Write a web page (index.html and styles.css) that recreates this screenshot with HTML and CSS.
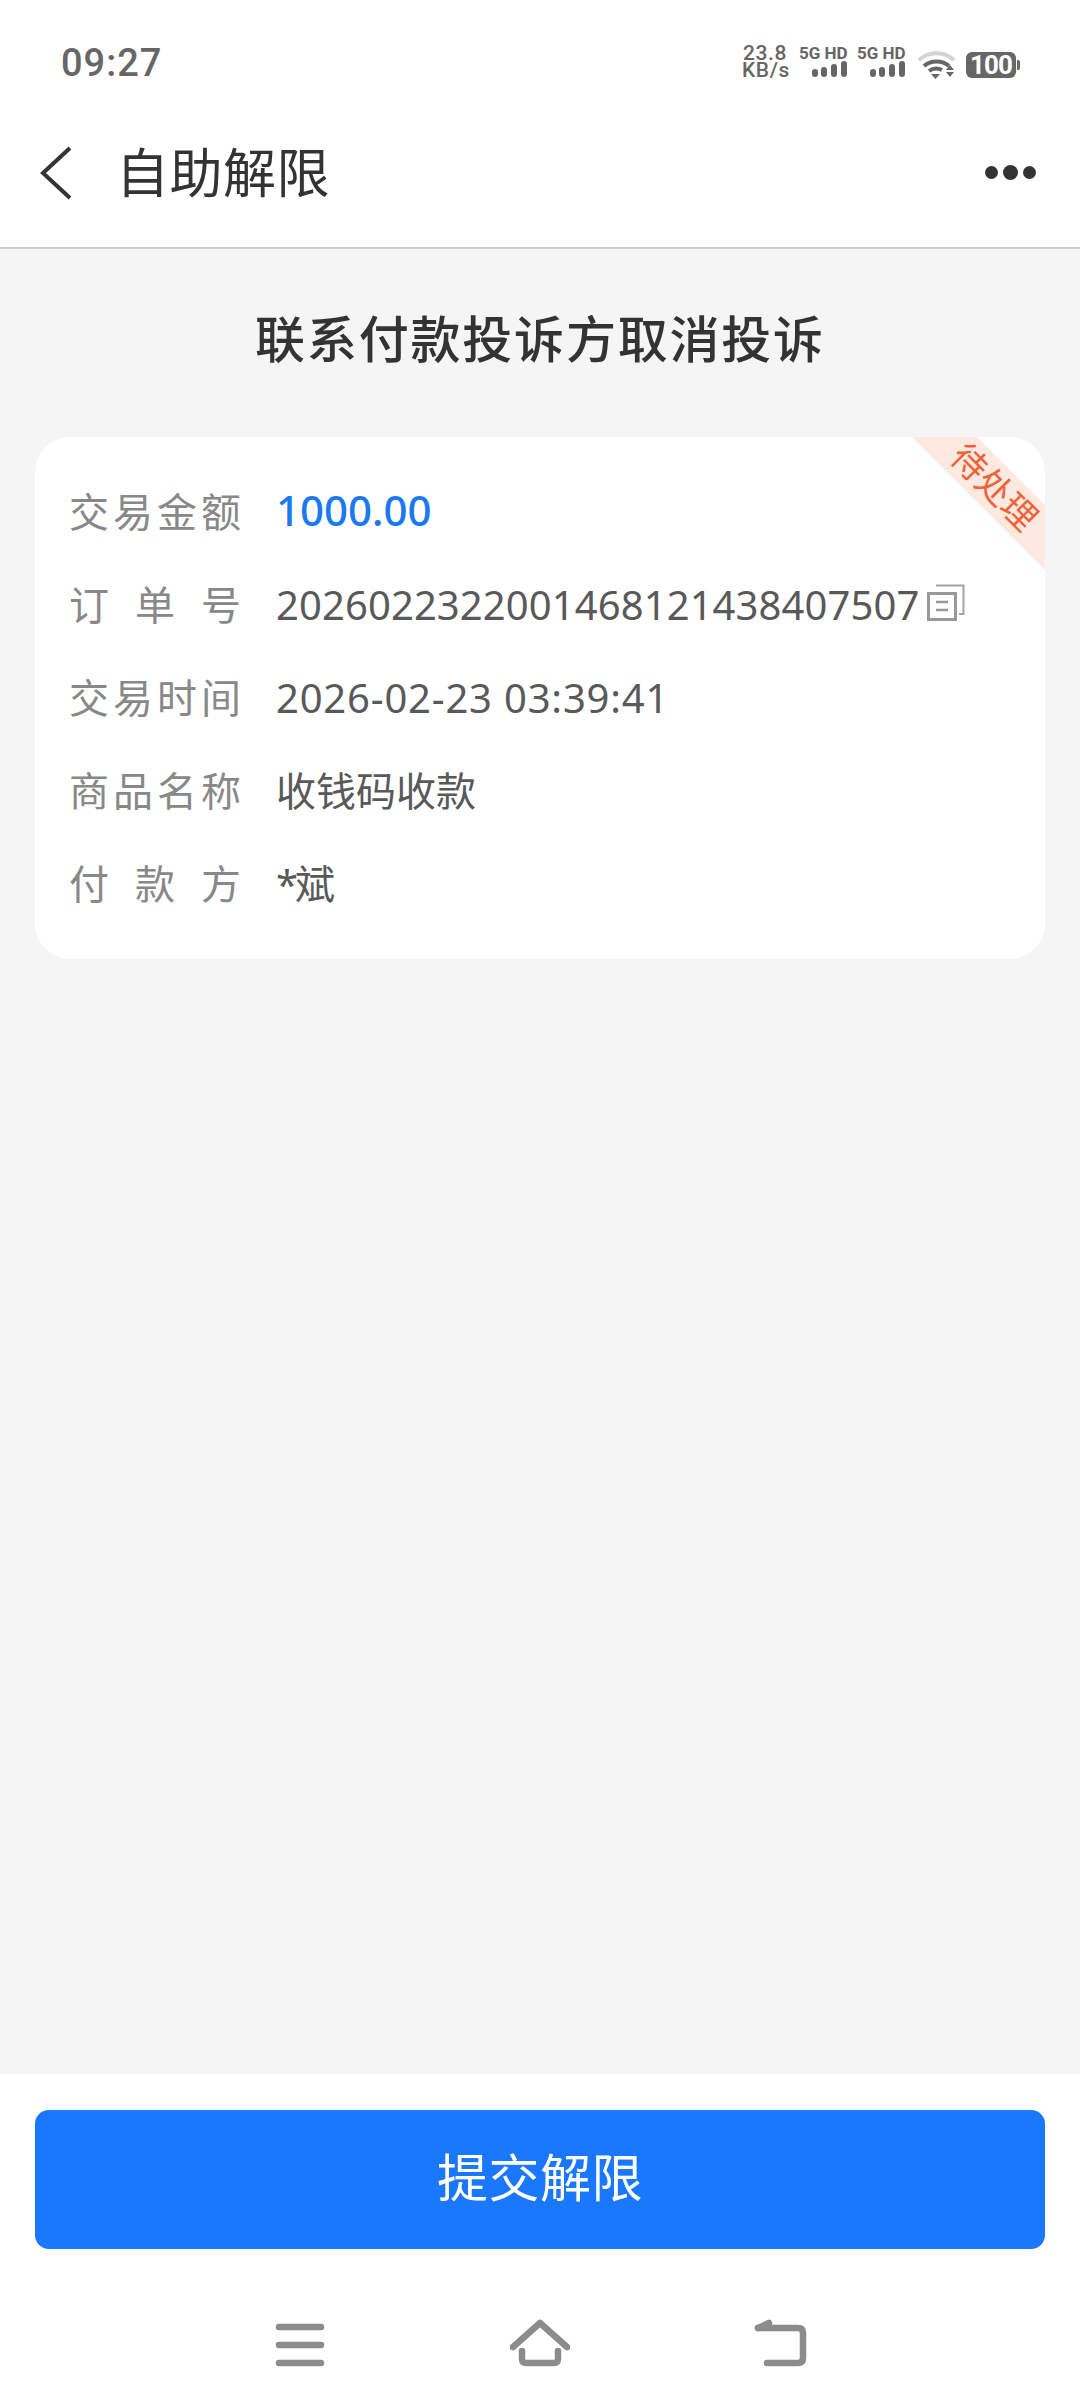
FILE: index.html
```html
<!DOCTYPE html>
<html lang="zh-CN">

<head>
    <meta charset="UTF-8">
    <meta name="viewport" content="width=device-width, initial-scale=1.0">
    <title>自助解限</title>
    <link rel="stylesheet" href="styles.css">
</head>

<body>
    <div class="status-bar">
        <span class="time">09:27</span>
        <div class="status-icons">
            <div class="speed">23.8
KB/s</div>
            <div class="sim">
                <span class="sim-name">5G HD</span>
                <svg class="sim-bars" width="35" height="16" viewBox="0 0 35 16">
                    <rect x="0" y="8" width="6" height="8" rx="3" />
                    <rect x="9" y="6" width="6" height="10" rx="3" />
                    <rect x="19" y="3" width="6" height="13" rx="3" />
                    <rect x="29" y="0" width="6" height="16" rx="3" />
                </svg>
            </div>
            <div class="sim">
                <span class="sim-name">5G HD</span>
                <svg class="sim-bars" width="35" height="16" viewBox="0 0 35 16">
                    <rect x="0" y="8" width="6" height="8" rx="3" />
                    <rect x="9" y="6" width="6" height="10" rx="3" />
                    <rect x="19" y="3" width="6" height="13" rx="3" />
                    <rect x="29" y="0" width="6" height="16" rx="3" />
                </svg>
            </div>
            <svg class="wifi" width="37" height="28" viewBox="0 0 37 28">
                <path d="M1 9 C11 0 26 0 36 9" fill="none" stroke="#d4d4d4" stroke-width="4" />
                <path d="M6 15 C13 9 24 9 31 15" fill="none" stroke="#666" stroke-width="4" />
                <path d="M11 20 C15 17 20 17 24 19" fill="none" stroke="#666" stroke-width="4" />
                <path d="M13 23 H22 L17.500 28 Z" fill="#666" />
                <path d="M32 14 L36 19 H28 Z M28 21 H36 L32 26 Z" fill="#666" />
            </svg>
            <div class="battery"><span class="battery-level">100</span><i class="battery-cap"></i></div>
        </div>
    </div>

    <div class="header">
        <svg class="back" width="34" height="54" viewBox="0 0 34 54">
            <path d="M31 2 L4 27 L31 52" fill="none" stroke="#333" stroke-width="4" />
        </svg>
        <span class="header-title">自助解限</span>
        <div class="more"><i></i><i class="more-mid"></i><i></i></div>
    </div>

    <div class="main">
        <h1 class="page-title">联系付款投诉方取消投诉</h1>
        <div class="card">
            <div class="ribbon"></div>
            <span class="ribbon-text">待处理</span>
            <div class="row">
                <span class="label">交易金额</span>
                <span class="value amount">1000.00</span>
            </div>
            <div class="row">
                <span class="label">订单号</span>
                <span class="value order-no">2026022322001468121438407507</span>
                <svg class="copy" width="38" height="37" viewBox="0 0 38 37">
                    <path d="M9 1.500 H36.500 V30 H32" fill="none" stroke="#a3a3a3" stroke-width="2" />
                    <rect x="1.500" y="9.500" width="27" height="26" fill="none" stroke="#999" stroke-width="3" />
                    <path d="M9 18 H21 M9 26 H21" stroke="#999" stroke-width="2.500" />
                </svg>
            </div>
            <div class="row">
                <span class="label">交易时间</span>
                <span class="value trade-time">2026-02-23 03:39:41</span>
            </div>
            <div class="row">
                <span class="label">商品名称</span>
                <span class="value">收钱码收款</span>
            </div>
            <div class="row">
                <span class="label">付款方</span>
                <span class="value payer">*斌</span>
            </div>
        </div>
    </div>

    <div class="footer">
        <button class="submit">提交解限</button>
        <div class="nav">
            <svg width="60" height="50" viewBox="0 0 60 50">
                <path d="M9 9 H51 M9 27 H51 M9 45 H51" />
            </svg>
            <svg width="60" height="50" viewBox="0 0 60 50">
                <path d="M3 29 L30 5 L57 29" />
                <path d="M12 33 V41 Q12 45 16 45 H44 Q48 45 48 41 V33" />
            </svg>
            <svg width="60" height="50" viewBox="0 0 60 50">
                <path d="M8 10 H48 Q53 10 53 15 V40 Q53 45 48 45 H17" />
                <path d="M8 10 L19 5" />
            </svg>
        </div>
    </div>
</body>

</html>
```

FILE: styles.css
```css
* {
    margin: 0;
    padding: 0;
    box-sizing: border-box;
}

body {
    width: 1080px;
    height: 2408px;
    display: flex;
    flex-direction: column;
    overflow: hidden;
    background-color: #f5f5f5;
    font-family: "Noto Sans", "Noto Sans CJK SC", sans-serif;
}

.status-bar {
    height: 80px;
    padding: 42px 60px 0 61px;
    display: flex;
    justify-content: space-between;
    align-items: flex-start;
    background-color: #fff;
    color: #666;
}

.time {
    font-family: Roboto, sans-serif;
    font-size: 38px;
    line-height: 42px;
    font-weight: 500;
    letter-spacing: 1px;
}

.status-icons {
    display: flex;
    align-items: flex-start;
    margin-top: 3px;
}

.speed {
    width: 46px;
    font-family: Roboto, sans-serif;
    font-size: 21px;
    line-height: 17px;
    font-weight: 500;
    letter-spacing: 0.600px;
    text-align: center;
    white-space: pre-line;
}

.sim {
    width: 48px;
    margin-left: 11px;
    display: flex;
    flex-direction: column;
    align-items: flex-end;
}

.sim + .sim {
    margin-left: 10px;
}

.sim-name {
    width: 48px;
    font-family: Roboto, sans-serif;
    font-size: 17px;
    line-height: 16px;
    font-weight: 700;
    white-space: nowrap;
}

.sim-bars {
    display: block;
    fill: #666;
}

.wifi {
    margin: 6px 0 0 13px;
}

.battery {
    width: 54px;
    height: 26px;
    margin: 7px 0 0 11px;
    display: flex;
    align-items: center;
}

.battery-level {
    width: 50px;
    height: 26px;
    background-color: #666;
    border-radius: 6px;
    color: #fff;
    font-family: Roboto, sans-serif;
    font-size: 26px;
    line-height: 26px;
    font-weight: 700;
    letter-spacing: -1px;
    text-align: center;
}

.battery-cap {
    width: 3px;
    height: 10px;
    margin-left: 1px;
    background-color: #666;
    border-radius: 0 2px 2px 0;
}

.header {
    height: 169px;
    display: flex;
    align-items: center;
    padding: 18px 44px 0 39px;
    background-color: #fff;
    border-bottom: 2px solid #ccc;
}

.back {
    display: block;
}

.header-title {
    margin-left: 43px;
    font-size: 53px;
    line-height: 70px;
    color: #333;
    letter-spacing: 0.500px;
}

.more {
    margin-left: auto;
    display: flex;
    align-items: center;
    gap: 5px;
}

.more i {
    width: 13px;
    height: 13px;
    border-radius: 50%;
    background-color: #333;
}

.more .more-mid {
    width: 15px;
    height: 15px;
}

.main {
    flex: 1;
    padding: 55px 35px 0;
}

.page-title {
    margin-bottom: 63px;
    font-size: 50px;
    line-height: 70px;
    font-weight: 500;
    color: #333;
    text-align: center;
    letter-spacing: 1.800px;
}

.card {
    position: relative;
    padding: 26px 34px 31px;
    background-color: #fff;
    border-radius: 35px;
}

.ribbon {
    position: absolute;
    top: 0;
    right: 0;
    width: 133px;
    height: 133px;
    background-color: #fde9e0;
    clip-path: polygon(0 0, 65px 0, 133px 68px, 133px 133px);
}

.ribbon-text {
    position: absolute;
    right: -2px;
    top: 32px;
    width: 105px;
    text-align: center;
    font-size: 35px;
    line-height: 36px;
    color: #f0633a;
    transform: rotate(45deg);
}

.row {
    height: 93px;
    display: flex;
    align-items: center;
}

.label {
    width: 172px;
    margin-right: 35px;
    font-size: 40px;
    color: #888;
    text-align-last: justify;
}

.value {
    font-size: 40px;
    color: #595959;
    white-space: nowrap;
}

.amount {
    font-size: 42px;
    color: #1a78f0;
    font-weight: 500;
}

.order-no {
    padding-top: 4px;
    letter-spacing: 0.100px;
}

.trade-time {
    padding-top: 4px;
    letter-spacing: 0.800px;
}

.payer {
    letter-spacing: -3px;
}

.copy {
    margin-left: 8px;
}

.footer {
    height: 334px;
    padding: 36px 35px 0;
    background-color: #fff;
}

.submit {
    display: block;
    width: 100%;
    height: 139px;
    padding-bottom: 10px;
    background-color: #1a78ff;
    border: 0;
    border-radius: 14px;
    color: #fff;
    font-family: "Noto Sans CJK SC", sans-serif;
    font-size: 51px;
    letter-spacing: 0.500px;
}

.nav {
    margin-top: 69px;
    display: flex;
    justify-content: center;
    gap: 180px;
}

.nav svg {
    display: block;
    fill: none;
    stroke: #8c8c8c;
    stroke-width: 6.500;
    stroke-linecap: round;
    stroke-linejoin: round;
}
```
